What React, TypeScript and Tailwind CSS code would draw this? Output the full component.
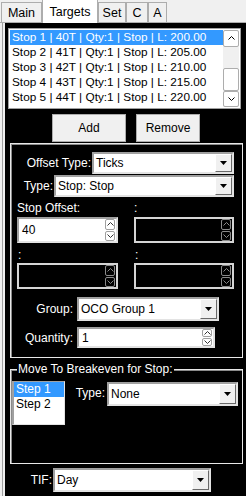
import React from "react";

const rows = [
  "Stop 1 | 40T | Qty:1 | Stop | L: 200.00",
  "Stop 2 | 41T | Qty:1 | Stop | L: 205.00",
  "Stop 3 | 42T | Qty:1 | Stop | L: 210.00",
  "Stop 4 | 43T | Qty:1 | Stop | L: 215.00",
  "Stop 5 | 44T | Qty:1 | Stop | L: 220.00",
];

function Chevron({ up, color = "#000" }: { up?: boolean; color?: string }) {
  return (
    <svg width="7" height="4" viewBox="0 0 7 4">
      <path
        d={up ? "M0.5 3.5 L3.5 0.5 L6.5 3.5" : "M0.5 0.5 L3.5 3.5 L6.5 0.5"}
        fill="none"
        stroke={color}
        strokeWidth="1"
      />
    </svg>
  );
}

function DropButton() {
  return (
    <div className="flex w-[17px] items-center justify-center border border-t-white border-l-white border-r-[#696969] border-b-[#696969] bg-[#f0f0f0]">
      <svg width="7" height="4" viewBox="0 0 7 4">
        <path d="M0 0 H7 L3.5 4 Z" fill="#000" />
      </svg>
    </div>
  );
}

function Combo({ value, className }: { value: string; className: string }) {
  return (
    <div
      className={`flex border-2 border-t-[#a0a0a0] border-l-[#a0a0a0] border-r-[#e3e3e3] border-b-[#e3e3e3] bg-white ${className}`}
    >
      <span className="flex-1 self-center pl-[2px] leading-[14px] text-black">
        {value}
      </span>
      <DropButton />
    </div>
  );
}

function SpinBtn({ up, disabled }: { up?: boolean; disabled?: boolean }) {
  return (
    <div
      className={`flex h-[11px] w-[10px] items-center justify-center rounded-[2px] border ${
        disabled ? "border-[#8a8a8a]" : "border-[#a0a0a0] bg-white"
      }`}
    >
      <Chevron up={up} color={disabled ? "#8a8a8a" : "#333"} />
    </div>
  );
}

function Spin({
  value,
  disabled,
  className,
}: {
  value?: string;
  disabled?: boolean;
  className: string;
}) {
  return (
    <div
      className={`flex border-2 ${
        disabled
          ? "border-[#d4d4d4] bg-black"
          : "border-t-[#a0a0a0] border-l-[#a0a0a0] border-r-[#e3e3e3] border-b-[#e3e3e3] bg-white"
      } ${className}`}
    >
      <span className="flex-1 self-center pl-[3px] leading-[14px] text-black">
        {value}
      </span>
      <div className="flex flex-col justify-center gap-[1px] pr-[1px]">
        <SpinBtn up disabled={disabled} />
        <SpinBtn disabled={disabled} />
      </div>
    </div>
  );
}

function Tab({ label, active, w }: { label: string; active?: boolean; w: string }) {
  return (
    <div
      className={`flex items-center justify-center border border-b-0 border-[#adadad] ${w} ${
        active ? "-mb-[1px] h-[24px] bg-white" : "h-[20px] bg-[#f0f0f0]"
      }`}
    >
      {label}
    </div>
  );
}

export default function App() {
  return (
    <div className="flex h-[496px] w-[246px] flex-col overflow-hidden bg-[#f0f0f0] font-[family-name:Liberation_Sans,Arial,sans-serif] text-[12px] leading-[14px] text-black">
      {/* tabs */}
      <div className="flex h-[23px] items-end border-b border-[#adadad] pl-[1px] text-[12.5px]">
        <Tab label="Main" w="w-[41px]" />
        <Tab label="Targets" w="w-[56px]" active />
        <Tab label="Set" w="w-[28px]" />
        <Tab label="C" w="w-[22px]" />
        <Tab label="A" w="w-[19px]" />
      </div>

      <div className="flex flex-1">
        <div className="ml-[2px] mr-[2px] w-[1px] bg-[#a0a0a0]" />
        <div className="flex-1 bg-black">
          {/* target list */}
          <div className="ml-[3px] mt-[5px] flex h-[81px] w-[233px] border border-[#a0a0a0] bg-white p-[1px]">
            <div className="flex-1 text-[11.8px]">
              {rows.map((r, i) => (
                <div
                  key={r}
                  className={`h-[15px] pl-[2px] leading-[15px] ${
                    i === 0 ? "bg-[#3399ff] text-white" : "text-black"
                  }`}
                >
                  {r}
                </div>
              ))}
            </div>
            <div className="flex w-[16px] flex-col bg-[#f0f0f0]">
              <div className="flex h-[17px] items-center justify-center rounded-[2px] border border-[#adadad] bg-white">
                <Chevron up />
              </div>
              <div className="h-[21px]" />
              <div className="h-[24px] rounded-[2px] border border-[#adadad] bg-white" />
              <div className="flex-1" />
              <div className="flex h-[16px] items-center justify-center rounded-[2px] border border-[#adadad] bg-white">
                <Chevron />
              </div>
            </div>
          </div>

          {/* buttons */}
          <div className="mt-[5px] flex gap-[10px] pl-[47px]">
            <button className="h-[28px] w-[74px] border border-[#adadad] bg-[#f0f0f0]">
              Add
            </button>
            <button className="h-[28px] w-[64px] border border-[#adadad] bg-[#f0f0f0]">
              Remove
            </button>
          </div>

          {/* target settings */}
          <div className="ml-[5px] mt-[1px] h-[215px] w-[233px] border border-[#e8e8e8] pt-[8px] text-white shadow-[inset_1px_1px_0_#8a8a8a]">
            <div className="flex items-center">
              <span className="w-[80px] text-right">Offset Type:</span>
              <Combo value="Ticks" className="ml-[1px] h-[22px] w-[142px]" />
            </div>
            <div className="mt-[1px] flex items-center">
              <span className="w-[42px] text-right">Type:</span>
              <Combo value="Stop: Stop" className="ml-[1px] h-[22px] w-[180px]" />
            </div>
            <div className="mt-[4px] flex pl-[6px]">
              <span className="w-[117px]">Stop Offset:</span>
              <span>:</span>
            </div>
            <div className="mt-[2px] flex gap-[16px] pl-[6px]">
              <Spin value="40" className="h-[26px] w-[101px]" />
              <Spin disabled className="h-[26px] w-[100px]" />
            </div>
            <div className="mt-[5px] flex pl-[7px]">
              <span className="w-[117px]">:</span>
              <span>:</span>
            </div>
            <div className="mt-[1px] flex gap-[16px] pl-[6px]">
              <Spin disabled className="h-[26px] w-[101px]" />
              <Spin disabled className="h-[26px] w-[100px]" />
            </div>
            <div className="mt-[8px] flex items-center">
              <span className="w-[62px] text-right">Group:</span>
              <Combo value="OCO Group 1" className="ml-[4px] h-[24px] w-[142px]" />
            </div>
            <div className="mt-[6px] flex items-center">
              <span className="w-[62px] text-right">Quantity:</span>
              <Spin value="1" className="ml-[4px] h-[21px] w-[138px]" />
            </div>
          </div>

          {/* breakeven */}
          <div className="relative ml-[5px] mt-[11px] h-[95px] w-[233px] border border-[#e8e8e8] pt-[11px] text-white shadow-[inset_1px_1px_0_#8a8a8a]">
            <span className="absolute -top-[8px] left-[6px] bg-black px-[1px] leading-[14px]">
              Move To Breakeven for Stop:
            </span>
            <div className="flex items-start">
              <div className="ml-[1px] h-[44px] w-[53px] border border-l-2 border-[#a0a0a0] border-r-[#e3e3e3] border-b-[#e3e3e3] bg-white text-black">
                <div className="h-[15px] bg-[#3399ff] pl-[2px] leading-[15px] text-white">
                  Step 1
                </div>
                <div className="h-[15px] pl-[2px] leading-[15px]">Step 2</div>
              </div>
              <span className="ml-[10px] mt-[5px] w-[30px] text-right">Type:</span>
              <Combo value="None" className="ml-[2px] mt-[1px] h-[24px] w-[131px]" />
            </div>
          </div>

          {/* TIF */}
          <div className="mt-[4px] flex items-center text-white">
            <span className="w-[47px] text-right">TIF:</span>
            <Combo value="Day" className="ml-[1px] h-[24px] w-[158px]" />
          </div>
        </div>
      </div>
    </div>
  );
}
